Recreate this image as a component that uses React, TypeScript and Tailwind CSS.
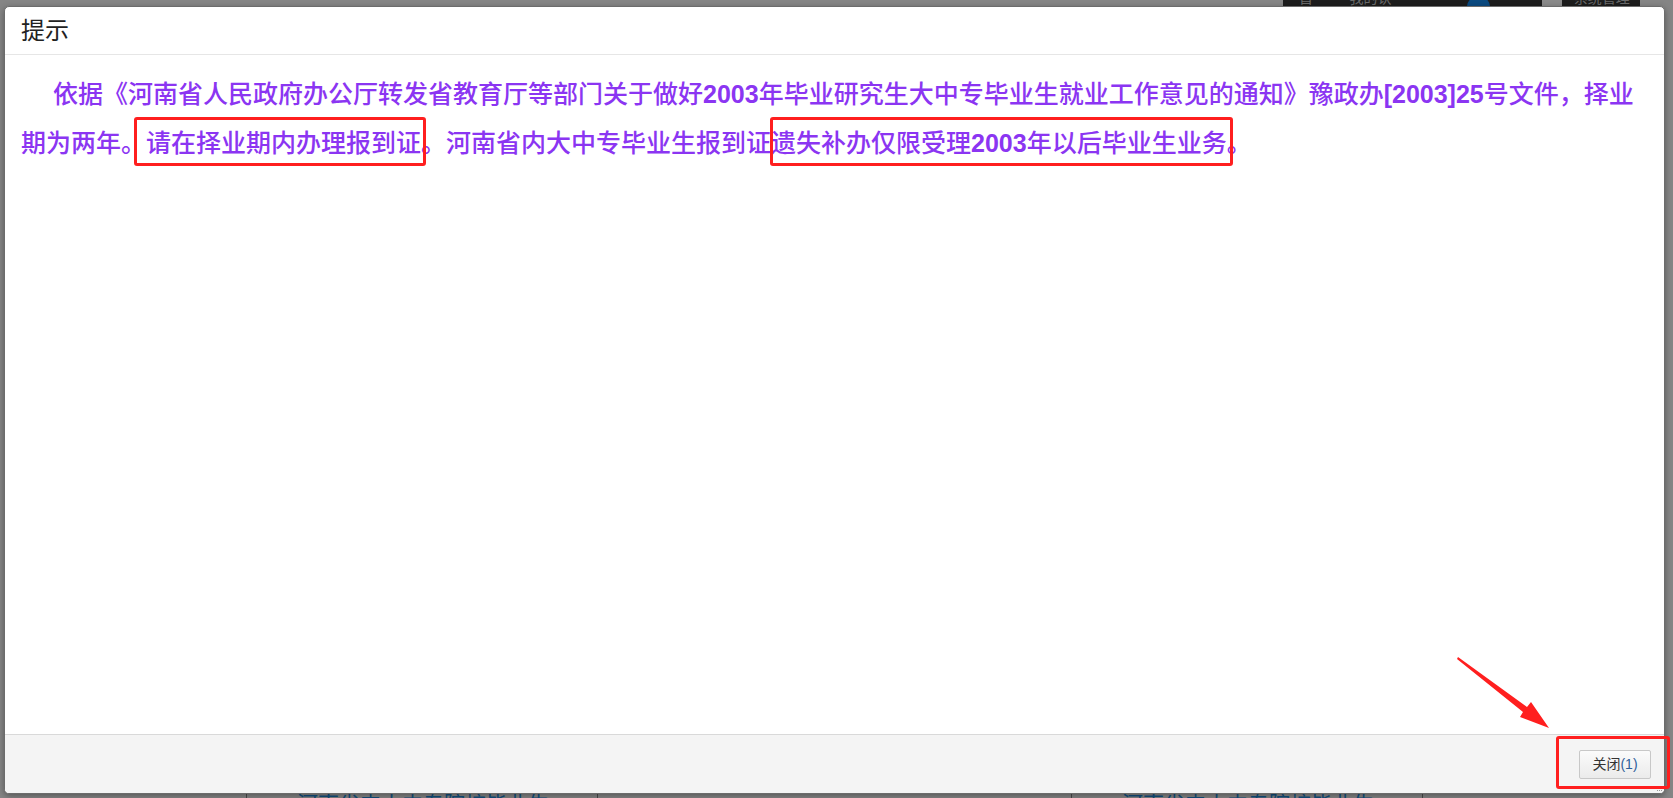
export default function App() {
  const cjk = '"Liberation Sans", "Noto Sans CJK SC", sans-serif';
  return (
    <div
      className="relative h-[798px] w-full overflow-hidden bg-[#858585]"
      style={{ fontFamily: cjk }}
    >
      {/* page behind the mask */}
      <div className="flex h-[6px]">
        <div className="ml-[1283px] flex h-[6px] w-[357px] items-start gap-6 overflow-hidden bg-[#1d1d1d] pl-4 text-[14px] leading-[14px] text-[#6a6a6a]">
          <span className="-mt-[9px]">首页</span>
          <span className="-mt-[9px]">我的认证</span>
          <span className="-mt-[4px] ml-[40px] h-[22px] w-[23px] shrink-0 rounded-full bg-[#0b4a80]" />
          <span className="-mt-[2px] ml-[28px] h-[10px] w-[20px] shrink-0 bg-[#8a8a8a]" />
          <span className="-mt-[9px] -ml-3">系统管理员</span>
        </div>
      </div>
      <div className="absolute bottom-0 left-0 right-0 flex h-[5px] overflow-hidden">
        <div className="w-[247px] shrink-0 border-r border-[#4a4a4a]" />
        <div className="w-[351px] shrink-0 border-r border-[#4a4a4a] pl-[50px] text-[21px] leading-[21px] text-[#124f7e]">
          河南省内大中专院校毕业生
        </div>
        <div className="w-[474px] shrink-0 border-r border-[#4a4a4a]" />
        <div className="w-[351px] shrink-0 border-r border-[#4a4a4a] pl-[50px] text-[21px] leading-[21px] text-[#124f7e]">
          河南省内大中专院校毕业生
        </div>
      </div>

      {/* dialog */}
      <div className="absolute left-[4px] top-[6px] flex h-[788px] w-[1661px] flex-col overflow-hidden rounded-[5px] border border-[#6c6c6c] bg-white shadow-[0_2px_6px_rgba(0,0,0,0.35)]">
        <div className="flex h-[48px] shrink-0 items-center border-b border-[#e6e6e6] pl-[16px] text-[24px] text-[#222]">
          提示
        </div>
        <div className="flex-1 px-[16px] pt-[15px]">
          <p className="indent-[32px] text-[25px] font-medium leading-[49px] text-[#8b35f2]">
            依据《河南省人民政府办公厅转发省教育厅等部门关于做好
            <b className="font-bold">2003</b>
            年毕业研究生大中专毕业生就业工作意见的通知》豫政办
            <b className="font-bold">[2003]25</b>
            号文件，择业期为两年。请在择业期内办理报到证。河南省内大中专毕业生报到证遗失补办仅限受理
            <b className="font-bold">2003</b>
            年以后毕业生业务。
          </p>
        </div>
        <div className="flex h-[59px] shrink-0 items-center justify-end border-t border-[#d9d9d9] bg-[#f4f4f4] pr-[13px]">
          <button
            type="button"
            className="h-[29px] w-[72px] rounded-[2px] border border-[#c8c8c8] bg-gradient-to-b from-[#fbfbfb] to-[#ebebeb] text-[14px] text-[#333]"
          >
            关闭<span className="text-[#2f5f9a]">(1)</span>
          </button>
        </div>
        <svg
          className="absolute bottom-[1px] right-[1px]"
          width="8"
          height="8"
          viewBox="0 0 8 8"
        >
          <rect x="6" y="2" width="1" height="1" fill="#999" />
          <rect x="4" y="4" width="1" height="1" fill="#999" />
          <rect x="6" y="4" width="1" height="1" fill="#999" />
          <rect x="2" y="6" width="1" height="1" fill="#999" />
          <rect x="4" y="6" width="1" height="1" fill="#999" />
          <rect x="6" y="6" width="1" height="1" fill="#999" />
        </svg>
      </div>

      {/* red annotations */}
      <div className="pointer-events-none absolute left-[134px] top-[117px] h-[49px] w-[292px] rounded-[3px] border-[3px] border-[#ff1f1f]" />
      <div className="pointer-events-none absolute left-[770px] top-[117px] h-[49px] w-[463px] rounded-[3px] border-[3px] border-[#ff1f1f]" />
      <div className="pointer-events-none absolute left-[1556px] top-[736px] h-[53px] w-[114px] rounded-[3px] border-[3px] border-[#ff1f1f]" />
      <svg
        className="pointer-events-none absolute left-0 top-0"
        width="1673"
        height="798"
      >
        <polygon
          points="1458,657 1527,707 1531,702 1549,728 1520,717 1523,712 1457,659"
          fill="#ff1f1f"
        />
      </svg>
    </div>
  );
}
